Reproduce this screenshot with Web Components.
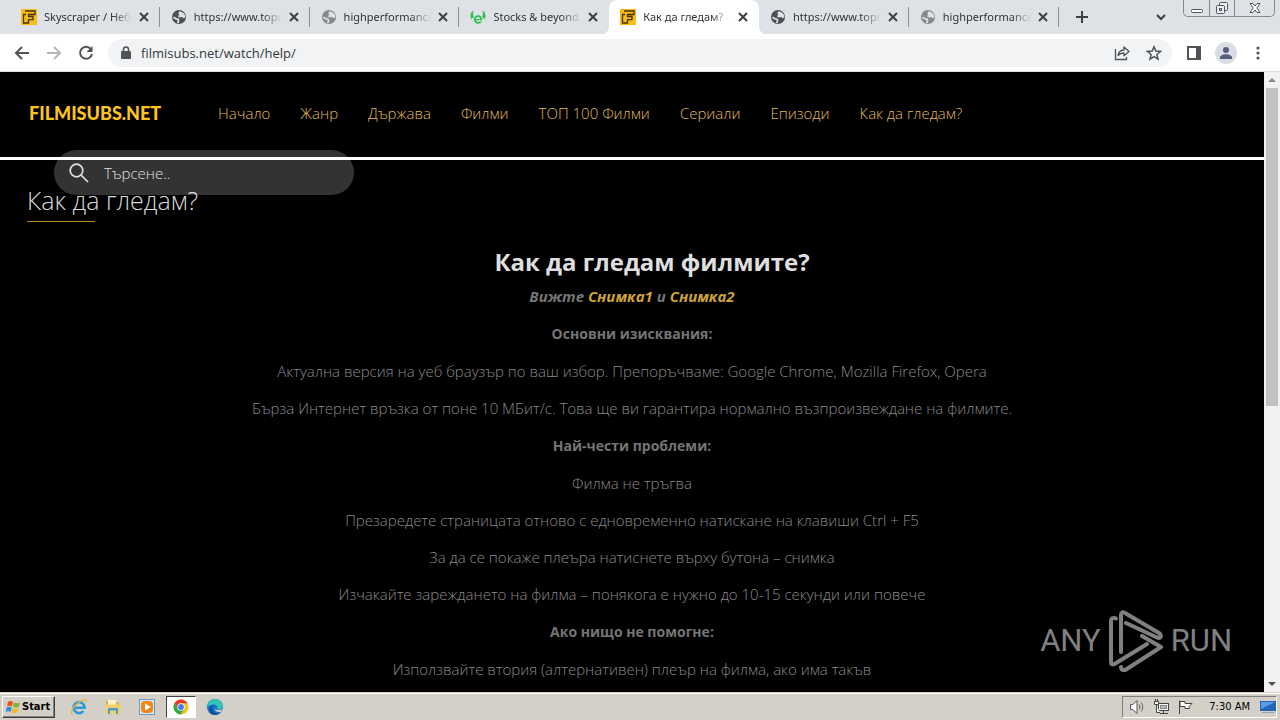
<!DOCTYPE html>
<html lang="bg">
<head>
<meta charset="utf-8">
<meta name="viewport" content="width=device-width, initial-scale=1">
<title>Как да гледам?</title>
<style>
  html, body {
    height: 100%;
    margin: 0;
  }

  body {
    display: flex;
    flex-direction: column;
    overflow: hidden;
    background: #000;
    font-family: "Open Sans", "Noto Sans", sans-serif;
  }
</style>
</head>
<body>
<browser-tabs>
  <browser-tab icon="film">Skyscraper / Небо</browser-tab>
  <browser-tab icon="globe">https://www.topr</browser-tab>
  <browser-tab icon="globe" muted>highperformanced</browser-tab>
  <browser-tab icon="etoro">Stocks &amp; beyond,</browser-tab>
  <browser-tab icon="film" active>Как да гледам? -</browser-tab>
  <browser-tab icon="globe">https://www.topr</browser-tab>
  <browser-tab icon="globe" muted>highperformanced</browser-tab>
</browser-tabs>
<browser-toolbar url="filmisubs.net/watch/help/"></browser-toolbar>
<page-view>
  <site-header>
    <a href="#">Начало</a>
    <a href="#">Жанр</a>
    <a href="#">Държава</a>
    <a href="#">Филми</a>
    <a href="#">ТОП 100 Филми</a>
    <a href="#">Сериали</a>
    <a href="#">Епизоди</a>
    <a href="#">Как да гледам?</a>
  </site-header>
  <help-article heading="Как да гледам?"></help-article>
  <run-watermark slot="overlay"></run-watermark>
</page-view>
<task-bar time="7:30 AM"></task-bar>

<script>
(() => {
  const ICONS = {
    film: `<svg width="16" height="16" viewBox="0 0 16 16"><rect width="16" height="16" fill="#f6bd16"/><path d="M4 2h10v3.500H7.500v2H12v3.200H7.500V14H2.500V5.500H5" fill="none" stroke="#4a3306" stroke-width="1.300"/></svg>`,
    globe: `<svg width="16" height="16" viewBox="0 0 16 16"><circle cx="8" cy="8" r="7" fill="currentColor"/><path d="M2.500 8.300 5 9.800l2 .3.500 1.700L6.800 14" fill="none" stroke="#dee1e6" stroke-width="1.800" stroke-linejoin="round"/><path d="M8.500 2.200 7.300 4.200l1 1.300L7 7.200l1.500 1.300 2.800-.6 1.200 1.300 1.800-.7c.2-2.800-1.300-5.300-5.800-6.300z" fill="#dee1e6"/></svg>`,
    etoro: `<svg width="16" height="16" viewBox="0 0 16 16"><path d="M3.500 1.500C.3 3.500-.5 7 1.500 10.500c.5-1.200 1.300-2 2.500-2.500C3 6 2.800 4 3.500 1.500zM12.500 1.500c3.200 2 4 5.500 2 9-.5-1.200-1.300-2-2.500-2.500 1-2 1.200-4 .5-6.500z" fill="#2fc14c"/><circle cx="8" cy="10.500" r="3.300" fill="none" stroke="#2fc14c" stroke-width="1.800"/><path d="M5 10.700h6.500" stroke="#2fc14c" stroke-width="1.300"/><path d="M9 11.800h4" stroke="#dee1e6" stroke-width="1"/></svg>`,
  };

  const RESET = `
    :host, *, *::after, *::before {
      box-sizing: border-box;
    }
    button {
      display: grid;
      place-items: center;
      padding: 0;
      border: 0;
      background: none;
      color: inherit;
      font: inherit;
    }
    svg {
      display: block;
    }
  `;

  class BrowserTab extends HTMLElement {
    constructor() {
      super();
      this.attachShadow({ mode: 'open' });
    }

    connectedCallback() {
      this.shadowRoot.innerHTML = `
        <style>
          ${RESET}
          :host {
            flex: 0 1 150px;
            min-width: 0;
            height: 34px;
            display: flex;
            align-items: center;
            position: relative;
            padding: 0 6px 0 11px;
            border-radius: 8px 8px 0 0;
            color: #4c5054;
            font: 11px/16px "Noto Sans", "Open Sans", sans-serif;
          }
          :host([muted]) .icon {
            color: #86898d;
          }
          :host([active]) {
            background: #fff;
          }
          :host([active])::before,
          :host([active])::after {
            content: '';
            width: 8px;
            height: 8px;
            position: absolute;
            bottom: 0;
          }
          :host([active])::before {
            right: 100%;
            background: radial-gradient(circle at 0 0, #dee1e6 8px, #fff 8px);
          }
          :host([active])::after {
            left: 100%;
            background: radial-gradient(circle at 100% 0, #dee1e6 8px, #fff 8px);
          }
          .title {
            flex: 1;
            min-width: 0;
            margin-left: 7px;
            overflow: hidden;
            white-space: nowrap;
            color: #2f3337;
            -webkit-mask-image: linear-gradient(to left, transparent, #000 20px);
            mask-image: linear-gradient(to left, transparent, #000 20px);
          }
          button {
            width: 20px;
            height: 20px;
            margin-left: 2px;
          }
          .line {
            width: 1px;
            height: 20px;
            position: absolute;
            right: 0;
            top: 7px;
            background: #8b8e93;
          }
          :host([active]) .line,
          :host([before-active]) .line {
            display: none;
          }
        </style>
        <span class="icon">${ICONS[this.getAttribute('icon')]}</span>
        <span class="title"><slot></slot></span>
        <button aria-label="Close tab">
          <svg width="10" height="10" viewBox="0 0 10 10" stroke="#3c4043" stroke-width="2"><path d="M1 1l8 8M9 1 1 9"/></svg>
        </button>
        <span class="line"></span>
      `;
      const next = this.nextElementSibling;
      this.toggleAttribute('before-active', !!next && next.hasAttribute('active'));
    }
  }

  class BrowserTabs extends HTMLElement {
    constructor() {
      super();
      this.attachShadow({ mode: 'open' }).innerHTML = `
        <style>
          ${RESET}
          :host {
            flex: none;
            display: flex;
            height: 34px;
            padding: 0 5px 0 10px;
            background: #dee1e6;
            color: #3c4043;
          }
          .tabs {
            flex: 0 1 auto;
            min-width: 0;
            display: flex;
          }
          .new, .search {
            width: 30px;
            height: 34px;
          }
          .new {
            margin-left: 8px;
          }
          .search {
            margin: 0 7px 0 auto;
          }
          .window {
            display: flex;
            height: 17px;
            border: 1px solid #85888f;
            border-top: 0;
            border-radius: 0 0 5px 5px;
          }
          .window button {
            width: 25px;
          }
          .window button:last-child {
            width: 40px;
          }
          .window button + button {
            border-left: 1px solid #85888f;
          }
        </style>
        <div class="tabs"><slot></slot></div>
        <button class="new" aria-label="New tab">
          <svg width="12" height="12" viewBox="0 0 12 12" stroke="currentColor" stroke-width="2"><path d="M6 0v12M0 6h12"/></svg>
        </button>
        <button class="search" aria-label="Search tabs">
          <svg width="10" height="7" viewBox="0 0 10 7" fill="none" stroke="currentColor" stroke-width="2"><path d="m1 1 4 4 4-4"/></svg>
        </button>
        <div class="window">
          <button aria-label="Minimize">
            <svg width="14" height="14" viewBox="0 0 14 14" fill="#fff" stroke="#50545c"><rect x="1.500" y="8.500" width="11" height="3" rx="1"/></svg>
          </button>
          <button aria-label="Restore">
            <svg width="14" height="14" viewBox="0 0 14 14" fill="#eef0f3" stroke="#50545c"><rect x="4.500" y="1.500" width="8" height="8" rx="1"/><rect x="1.500" y="4.500" width="8" height="8" rx="1"/><rect x="4.500" y="7.500" width="2" height="2"/></svg>
          </button>
          <button aria-label="Close">
            <svg width="14" height="14" viewBox="0 0 14 14" fill="#fff" stroke="#50545c" stroke-linejoin="round"><path d="M2 2.500h3l2 2.500 2-2.500h3L8.800 7l3.200 4.500H9L7 9l-2 2.500H2L5.200 7z"/></svg>
          </button>
        </div>
      `;
    }
  }

  class BrowserToolbar extends HTMLElement {
    constructor() {
      super();
      this.attachShadow({ mode: 'open' });
    }

    connectedCallback() {
      this.shadowRoot.innerHTML = `
        <style>
          ${RESET}
          :host {
            flex: none;
            display: flex;
            align-items: center;
            height: 38px;
            padding: 0 6px;
            border-bottom: 1px solid #dadce0;
            background: #fff;
            color: #4f5357;
          }
          button {
            flex: none;
            width: 32px;
            height: 28px;
          }
          .address {
            flex: 1;
            display: flex;
            align-items: center;
            height: 28px;
            margin: 0 6px;
            padding: 0 2px 0 11px;
            border-radius: 14px;
            background: #f1f3f4;
          }
          input {
            flex: 1;
            min-width: 0;
            height: 28px;
            margin: 0 0 0 8px;
            padding: 0;
            border: 0;
            outline: 0;
            background: none;
            color: #34373b;
            font: 13px/20px "Open Sans", "Noto Sans", sans-serif;
          }
          .avatar {
            width: 22px;
            height: 22px;
            overflow: hidden;
            border-radius: 50%;
            background: #dadde3;
          }
        </style>
        <button aria-label="Back"><svg width="16" height="16" viewBox="0 0 16 16" fill="none" stroke="currentColor" stroke-width="2"><path d="M15 8H2M8 2 2 8l6 6"/></svg></button>
        <button aria-label="Forward"><svg width="16" height="16" viewBox="0 0 16 16" fill="none" stroke="#b4b6b9" stroke-width="2"><path d="M1 8h13M8 2l6 6-6 6"/></svg></button>
        <button aria-label="Reload"><svg width="16" height="16" viewBox="0 0 16 16" fill="none" stroke="currentColor" stroke-width="2"><path d="M12.800 4A6 6 0 1 0 14 9"/><path d="M14.500 1v6h-6z" fill="currentColor" stroke="none"/></svg></button>
        <div class="address">
          <svg width="14" height="16" viewBox="0 0 14 16"><rect x="2" y="6" width="10" height="8" rx="1" fill="currentColor"/><path d="M4.500 7V4.500a2.500 2.500 0 0 1 5 0V7" fill="none" stroke="currentColor" stroke-width="1.600"/></svg>
          <input type="text" aria-label="Address" spellcheck="false">
          <button aria-label="Share"><svg width="16" height="16" viewBox="0 0 16 16" fill="none" stroke="currentColor" stroke-width="1.300"><path d="M1.500 4v10.500h11V12"/><path d="M4 10.500c.5-3.500 2.500-5.300 6-5.500V2l5 4.500-5 4.300V8C7.500 8 5.500 8.800 4 10.500z" stroke-linejoin="round"/></svg></button>
          <button aria-label="Bookmark"><svg width="16" height="16" viewBox="0 0 16 16" fill="none" stroke="currentColor" stroke-width="1.500"><path d="m8 1.800 1.800 4.300 4.700.4-3.600 3 1.100 4.600L8 11.600l-4 2.500 1.100-4.600-3.600-3 4.700-.4z"/></svg></button>
        </div>
        <button aria-label="Side panel"><svg width="14" height="14" viewBox="0 0 14 14"><path d="M1 1h12v12H1z" fill="none" stroke="currentColor" stroke-width="2"/><path d="M9 1h4v12H9z" fill="currentColor"/></svg></button>
        <button aria-label="Profile"><span class="avatar"><svg width="22" height="22" viewBox="0 0 22 22" fill="#535e80"><circle cx="11" cy="8" r="3"/><path d="M5 17v-1.500c0-2 3-3.300 6-3.300s6 1.300 6 3.300V17z"/></svg></span></button>
        <button aria-label="Menu"><svg width="4" height="16" viewBox="0 0 4 16" fill="currentColor"><circle cx="2" cy="3" r="1.600"/><circle cx="2" cy="8" r="1.600"/><circle cx="2" cy="13" r="1.600"/></svg></button>
      `;
      this.shadowRoot.querySelector('input').value = this.getAttribute('url');
    }
  }

  class PageView extends HTMLElement {
    constructor() {
      super();
      this.attachShadow({ mode: 'open' }).innerHTML = `
        <style>
          ${RESET}
          :host {
            flex: 1;
            min-height: 0;
            display: flex;
            position: relative;
            overflow: hidden;
            background: #000;
          }
          .content {
            flex: 1;
            min-width: 0;
            overflow: hidden;
          }
          .scroll {
            flex: none;
            width: 16px;
            display: flex;
            flex-direction: column;
            background: #f1f1f1;
            color: #505050;
          }
          .scroll button {
            height: 16px;
          }
          .scroll button:first-child {
            color: #8b8b8b;
          }
          .track {
            flex: 1;
            padding: 0 2px;
          }
          .thumb {
            height: 54%;
            background: #c1c1c1;
          }
        </style>
        <div class="content"><slot></slot></div>
        <div class="scroll">
          <button aria-label="Scroll up"><svg width="8" height="4" viewBox="0 0 8 4" fill="currentColor"><path d="M0 4 4 0l4 4z"/></svg></button>
          <div class="track"><div class="thumb"></div></div>
          <button aria-label="Scroll down"><svg width="8" height="4" viewBox="0 0 8 4" fill="currentColor"><path d="m0 0 4 4 4-4z"/></svg></button>
        </div>
        <slot name="overlay"></slot>
      `;
    }
  }

  class SiteHeader extends HTMLElement {
    constructor() {
      super();
      this.attachShadow({ mode: 'open' }).innerHTML = `
        <style>
          ${RESET}
          :host {
            display: flex;
            align-items: center;
            position: relative;
            height: 88px;
            padding: 0 29px 4px;
            border-bottom: 3px solid #fff;
          }
          .logo {
            flex: none;
            width: 189px;
            color: #fcc41c;
            font: 900 18px/28px Lato, "Open Sans", sans-serif;
            text-decoration: none;
          }
          nav {
            display: flex;
            gap: 30px;
            white-space: nowrap;
          }
          ::slotted(a) {
            color: #e0b95c;
            font-size: 15px;
            font-weight: 300;
            line-height: 22px;
            text-decoration: none;
          }
          form {
            width: 300px;
            height: 45px;
            display: flex;
            align-items: center;
            position: absolute;
            left: 54px;
            top: 78px;
            z-index: 1;
            margin: 0;
            padding: 0 15px;
            border-radius: 23px;
            background: rgba(255, 255, 255, 0.2);
            color: #e0e0e0;
          }
          input {
            flex: 1;
            min-width: 0;
            margin: 0 0 0 15px;
            padding: 0;
            border: 0;
            outline: 0;
            background: none;
            color: inherit;
            font: 300 15px/22px "Open Sans", "Noto Sans", sans-serif;
          }
          input::placeholder {
            color: #e0e0e0;
          }
        </style>
        <a class="logo" href="#">FILMISUBS.NET</a>
        <nav><slot></slot></nav>
        <form>
          <button type="button" aria-label="Търси"><svg width="20" height="20" viewBox="0 0 20 20" fill="none" stroke="currentColor" stroke-width="1.700"><circle cx="7.500" cy="7.500" r="6.300"/><path d="m12 12 7 7"/></svg></button>
          <input type="text" placeholder="Търсене.." aria-label="Търсене">
        </form>
      `;
    }
  }

  class HelpArticle extends HTMLElement {
    constructor() {
      super();
      this.attachShadow({ mode: 'open' });
    }

    connectedCallback() {
      this.shadowRoot.innerHTML = `
        <style>
          ${RESET}
          :host {
            display: block;
            padding: 20px 27px 0;
            color: #8a8a8a;
            font-size: 15px;
            font-weight: 300;
            line-height: 22px;
            text-align: center;
          }
          h1, h2, h3, p {
            margin: 0;
          }
          h1 {
            color: #d8d8d8;
            font-size: 25px;
            font-weight: 300;
            line-height: 41px;
            text-align: left;
          }
          h1::after {
            content: '';
            display: block;
            width: 68px;
            height: 1px;
            background: #b8892c;
          }
          h2 {
            margin-top: 23px;
            padding-left: 40px;
            color: #dedede;
            font-size: 24px;
            line-height: 34px;
          }
          h3 {
            color: #757575;
            font-size: 14px;
            font-weight: 700;
            line-height: 22px;
          }
          .see {
            margin-top: 6px;
            color: #757575;
            font-style: italic;
            font-weight: 700;
          }
          a {
            color: #cfa238;
            text-decoration: none;
          }
          section {
            display: grid;
            gap: 15px;
            margin-top: 16px;
          }
        </style>
        <h1>${this.getAttribute('heading')}</h1>
        <h2>Как да гледам филмите?</h2>
        <p class="see">Вижте <a href="#">Снимка1</a> и <a href="#">Снимка2</a></p>
        <section>
          <h3>Основни изисквания:</h3>
          <p>Актуална версия на уеб браузър по ваш избор. Препоръчваме: Google Chrome, Mozilla Firefox, Opera</p>
          <p>Бърза Интернет връзка от поне 10 МБит/с. Това ще ви гарантира нормално възпроизвеждане на филмите.</p>
        </section>
        <section>
          <h3>Най-чести проблеми:</h3>
          <p>Филма не тръгва</p>
          <p>Презаредете страницата отново с едновременно натискане на клавиши Ctrl + F5</p>
          <p>За да се покаже плеъра натиснете върху бутона – снимка</p>
          <p>Изчакайте зареждането на филма – понякога е нужно до 10-15 секунди или повече</p>
        </section>
        <section>
          <h3>Ако нищо не помогне:</h3>
          <p>Използвайте втория (алтернативен) плеър на филма, ако има такъв</p>
        </section>
      `;
    }
  }

  class RunWatermark extends HTMLElement {
    constructor() {
      super();
      this.attachShadow({ mode: 'open' }).innerHTML = `
        <style>
          ${RESET}
          :host {
            display: flex;
            align-items: center;
            gap: 7px;
            position: absolute;
            right: 48px;
            bottom: 20px;
            color: #808080;
            font: 31px/62px Roboto, "Open Sans", sans-serif;
          }
        </style>
        <span>ANY</span>
        <svg width="56" height="62" viewBox="0 0 56 62" fill="none" stroke="currentColor" stroke-width="4" stroke-linejoin="round" stroke-linecap="round"><path d="M8 8.500C5 7 3 8.500 3 11v41c0 2.500 1.500 3 3.500 2L39 34"/><path d="M13 42V5c0-3 2-3.500 4-2l34 20c3.500 2.500 1.500 6-2 4.500L18 13"/><path d="M13 57c0 3 2.500 4 5 2.500L53 37 34 26"/></svg>
        <span>RUN</span>
      `;
    }
  }

  class TaskBar extends HTMLElement {
    constructor() {
      super();
      this.attachShadow({ mode: 'open' });
    }

    connectedCallback() {
      this.shadowRoot.innerHTML = `
        <style>
          ${RESET}
          :host {
            flex: none;
            display: flex;
            align-items: center;
            height: 28px;
            padding: 0 3px 0 2px;
            border-top: 1px solid #d4d0c8;
            background: #d4d0c8;
            box-shadow: inset 0 1px #fff;
            color: #000;
            font: 11px/16px "DejaVu Sans Condensed", "DejaVu Sans", sans-serif;
          }
          .start {
            display: flex;
            align-items: center;
            gap: 1px;
            width: 53px;
            height: 22px;
            padding: 0 2px;
            border: 1px solid;
            border-color: #fff #404040 #404040 #fff;
            box-shadow: inset -1px -1px #808080;
            font-weight: bold;
          }
          .start svg {
            flex: none;
          }
          .apps {
            display: flex;
            gap: 4px;
            margin-left: 9px;
          }
          .apps button {
            width: 30px;
            height: 22px;
          }
          .apps .current {
            border: 1px solid;
            border-color: #404040 #fff #fff #404040;
            background: #fff;
          }
          .tray {
            display: flex;
            align-items: center;
            gap: 8px;
            height: 22px;
            margin-left: auto;
            padding: 0 0 0 6px;
            border: 1px solid;
            border-color: #808080 #fff #fff #808080;
          }
          time {
            margin: 0 2px 0 8px;
          }
        </style>
        <button class="start">
          <svg width="16" height="16" viewBox="0 0 16 16"><path d="M3 3c2-1.500 3.500-1 5 0L7 7.500c-1.500-1-3-1-5 0z" fill="#e8541d"/><path d="M9 3.500c2 1 3.500 1 6 0l-1.200 4.300c-2 1-4 1-5.700 0z" fill="#7fb52c"/><path d="M1.700 8.500c2-1 3.500-1 5 0l-1 4.500c-1.500-1-3.500-1-5 0z" fill="#2f8fd8"/><path d="M7.800 9c2 1 4 1 5.700 0l-1.200 4.300c-2 1.200-4 1-5.500 0z" fill="#f6b81f"/></svg>
          Start
        </button>
        <div class="apps">
          <button aria-label="Internet Explorer"><svg width="18" height="18" viewBox="0 0 18 18" fill="none"><path d="M4 9.800h10.500A5.500 5.500 0 1 0 13.400 13" stroke="#2b9be0" stroke-width="2.600"/><path d="M2.500 16C-.5 15 3 9 8 5s9-4.500 8.500-1.500" stroke="#e9b62c" stroke-width="1.300"/></svg></button>
          <button aria-label="Explorer"><svg width="18" height="18" viewBox="0 0 18 18"><path d="M2 3h5l1 1.500h7V14H2z" fill="#d9ae45"/><path d="M4 2h8v6H4z" fill="#fff6cf"/><path d="M1.500 6.500h15V16h-15z" fill="#f1d169"/><path d="M4 10h10v6h-2v-3.500H6V16H4z" fill="#4f9fd2"/></svg></button>
          <button aria-label="Media Player"><svg width="18" height="18" viewBox="0 0 18 18"><rect x="1.500" y="1.500" width="15" height="15" fill="#d6e6f3" stroke="#6b9bc5"/><rect x="3" y="3" width="12" height="12" rx="4" fill="#f18618"/><path d="m7 5.500 6 3.500-6 3.500z" fill="#fff"/></svg></button>
          <button class="current" aria-label="Chrome"><svg width="16" height="16" viewBox="0 0 16 16"><circle cx="8" cy="8" r="7.500" fill="#fbc116"/><path d="M1.500 4.300A7.500 7.500 0 0 1 14.500 4.300H8L4.800 9.900z" fill="#e33b2e"/><path d="M1.500 4.300A7.500 7.500 0 0 0 7.500 15.500L11.200 9.900 4.800 9.900z" fill="#2da94f"/><circle cx="8" cy="8" r="3.700" fill="#fff"/><circle cx="8" cy="8" r="2.900" fill="#3d7ff0"/></svg></button>
          <button aria-label="Edge"><svg width="18" height="18" viewBox="0 0 18 18"><circle cx="9" cy="9" r="8" fill="#1577c8"/><path d="M1 8.500C2 3 5.500 1 9 1c4.500 0 8 3.300 8 6.800 0 3-2.500 4.200-6 3.700 1.500-3-.5-5-3.500-5C4.500 6.500 2 7.500 1 8.500z" fill="#35c1b4"/><path d="M6.500 9.500c-.5 3.500 2.500 6 7.500 5.500-4 3.500-11 2-11-3 0-3 2.500-5 5-5-.9.700-1.400 1.500-1.500 2.500z" fill="#0d539f"/><path d="M16.500 11c-2 1.500-6.500 1.500-7.500 0-.5 2 2.500 3.500 6 2.700z" fill="#d4d0c8"/></svg></button>
        </div>
        <div class="tray">
          <svg width="16" height="16" viewBox="0 0 16 16" fill="#fff" stroke="#555"><path d="M1.500 5.500H4l4-4v13l-4-4H1.500z"/><path d="M10 5.500c1.300 1.500 1.300 3.500 0 5M12 3.500c2.300 2.500 2.300 6.500 0 9" fill="none"/></svg>
          <svg width="16" height="16" viewBox="0 0 16 16" fill="#f4f4f4" stroke="#444"><rect x="5.500" y="4.500" width="10" height="7"/><rect x="7.500" y="6.500" width="6" height="3" fill="#bbb" stroke="#888"/><path d="M7 14.500h8M10.500 12v2M1.500 2.500h4v3h-4zM3.500 6v7.500H7M2.500 0v2M4.500 0v2"/></svg>
          <svg width="16" height="16" viewBox="0 0 16 16" fill="#fff" stroke="#444"><path d="M2.500 15V1.500M3 2.500h5v2h7l-3 3 .5 2H8v-2H3z"/></svg>
          <time>${this.getAttribute('time')}</time>
          <svg width="16" height="16" viewBox="0 0 16 16"><path d="M0 2h16v10H0z" fill="#2464b8"/><path d="M1 3h14L1 10z" fill="#5a9ce4"/><path d="M2 13h12v1H2z" fill="#8ba3bb"/></svg>
        </div>
      `;
    }
  }

  window.customElements.define('browser-tab', BrowserTab);
  window.customElements.define('browser-tabs', BrowserTabs);
  window.customElements.define('browser-toolbar', BrowserToolbar);
  window.customElements.define('page-view', PageView);
  window.customElements.define('site-header', SiteHeader);
  window.customElements.define('help-article', HelpArticle);
  window.customElements.define('run-watermark', RunWatermark);
  window.customElements.define('task-bar', TaskBar);
})();
</script>
</body>
</html>
